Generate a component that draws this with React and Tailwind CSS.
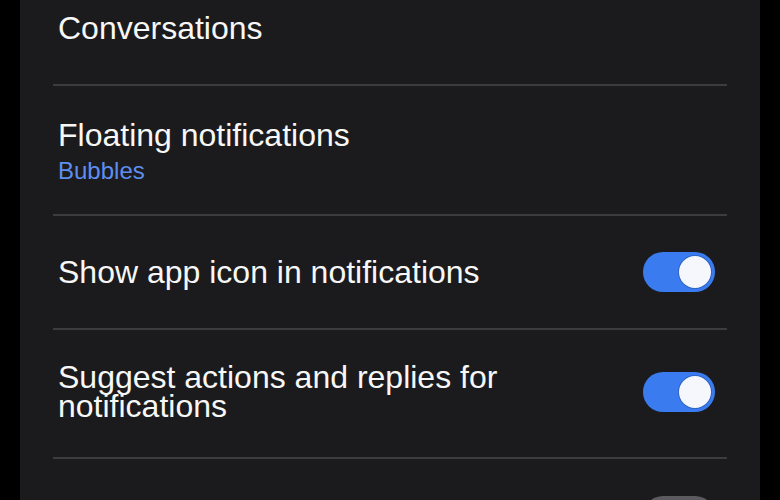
import React, { useState } from "react";

const Toggle = ({ on, onChange }) => (
  <button
    onClick={onChange}
    className={`shrink-0 w-[72px] h-[40px] rounded-full flex items-center ${
      on ? "bg-[#3b7bf0] justify-end pr-[4px]" : "bg-[#5c5c60] justify-start pl-[4px]"
    }`}
  >
    <span
      className={`w-[32px] h-[32px] rounded-full ${
        on ? "bg-[#f5f7fc] ring-1 ring-[#2f63c4]" : "bg-[#e4e4e6]"
      }`}
    ></span>
  </button>
);

const App = () => {
  const [appIcon, setAppIcon] = useState(true);
  const [suggest, setSuggest] = useState(true);
  const [dot, setDot] = useState(false);

  return (
    <div
      className="h-[500px] overflow-hidden bg-black flex justify-center text-[#f7f7f7]"
      style={{ fontFamily: '"Liberation Sans", Arial, sans-serif' }}
    >
      <div className="w-[740px] bg-[#1b1b1d] -mt-[28px]">
        {/* Conversations */}
        <div className="mx-[33px] h-[114px] border-b-2 border-[#3c3c3e] flex items-center pl-[5px]">
          <div className="text-[32px] leading-[29px]">Conversations</div>
        </div>

        {/* Floating notifications */}
        <div className="mx-[33px] pt-[35px] pb-[28px] border-b-2 border-[#3c3c3e] pl-[5px]">
          <div className="text-[32px] leading-[29px]">Floating notifications</div>
          <div className="mt-[6px] text-[24px] leading-[30px] text-[#5d8ef0]">Bubbles</div>
        </div>

        {/* Show app icon */}
        <div className="mx-[33px] h-[114px] border-b-2 border-[#3c3c3e] flex items-center pl-[5px] pr-[12px] gap-6">
          <div className="flex-1 text-[32px] leading-[29px]">Show app icon in notifications</div>
          <Toggle on={appIcon} onChange={() => setAppIcon(!appIcon)} />
        </div>

        {/* Suggest actions */}
        <div className="mx-[33px] pt-[33px] pb-[36px] border-b-2 border-[#3c3c3e] flex items-center pl-[5px] pr-[12px] gap-6">
          <div className="flex-1 text-[32px] leading-[29px] pr-[80px]">
            Suggest actions and replies for notifications
          </div>
          <Toggle on={suggest} onChange={() => setSuggest(!suggest)} />
        </div>

        {/* next row, only its switch peeks in */}
        <div className="mx-[33px] h-[114px] flex items-center pl-[5px] pr-[12px] gap-6">
          <div className="flex-1"></div>
          <Toggle on={dot} onChange={() => setDot(!dot)} />
        </div>
      </div>
    </div>
  );
};

export default App;
